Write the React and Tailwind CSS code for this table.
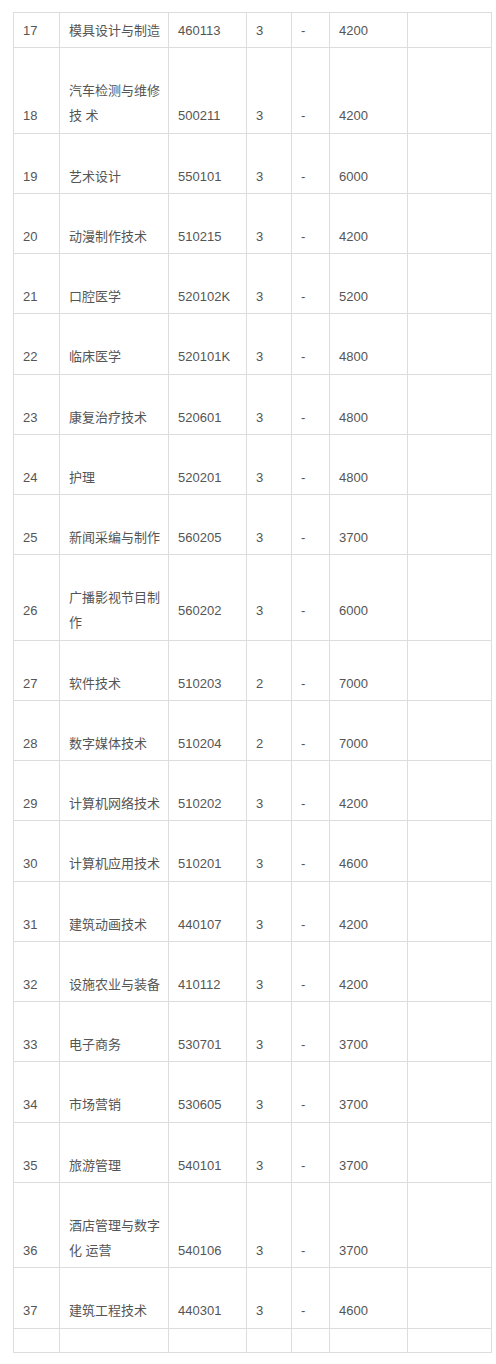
import React from "react";

const rows = [
  { h: "h-[35px]", type: "single", d: ["17", "模具设计与制造", "460113", "3", "-", "4200"] },
  { h: "h-[86px]", type: "tallLow", d: ["18", ["汽车检测与维修", "技 术"], "500211", "3", "-", "4200"] },
  { h: "h-[60px]", d: ["19", "艺术设计", "550101", "3", "-", "6000"] },
  { h: "h-[60px]", d: ["20", "动漫制作技术", "510215", "3", "-", "4200"] },
  { h: "h-[60px]", d: ["21", "口腔医学", "520102K", "3", "-", "5200"] },
  { h: "h-[61px]", d: ["22", "临床医学", "520101K", "3", "-", "4800"] },
  { h: "h-[60px]", d: ["23", "康复治疗技术", "520601", "3", "-", "4800"] },
  { h: "h-[60px]", d: ["24", "护理", "520201", "3", "-", "4800"] },
  { h: "h-[60px]", d: ["25", "新闻采编与制作", "560205", "3", "-", "3700"] },
  { h: "h-[86px]", type: "tallMid", d: ["26", ["广播影视节目制", "作"], "560202", "3", "-", "6000"] },
  { h: "h-[60px]", d: ["27", "软件技术", "510203", "2", "-", "7000"] },
  { h: "h-[60px]", d: ["28", "数字媒体技术", "510204", "2", "-", "7000"] },
  { h: "h-[60px]", d: ["29", "计算机网络技术", "510202", "3", "-", "4200"] },
  { h: "h-[61px]", d: ["30", "计算机应用技术", "510201", "3", "-", "4600"] },
  { h: "h-[60px]", d: ["31", "建筑动画技术", "440107", "3", "-", "4200"] },
  { h: "h-[60px]", d: ["32", "设施农业与装备", "410112", "3", "-", "4200"] },
  { h: "h-[60px]", d: ["33", "电子商务", "530701", "3", "-", "3700"] },
  { h: "h-[61px]", d: ["34", "市场营销", "530605", "3", "-", "3700"] },
  { h: "h-[60px]", d: ["35", "旅游管理", "540101", "3", "-", "3700"] },
  { h: "h-[85px]", type: "tallLow", d: ["36", ["酒店管理与数字", "化 运营"], "540106", "3", "-", "3700"] },
  { h: "h-[61px]", d: ["37", "建筑工程技术", "440301", "3", "-", "4600"] },
  { h: "h-[24px]", type: "empty", d: ["", "", "", "", "", ""] },
];

const widths = ["w-[46px]", "w-[109px]", "w-[78px]", "w-[45px]", "w-[38px]", "w-[78px]", "w-[84px]"];

function linesFor(row, idx) {
  const v = row.d[idx];
  if (row.type === "empty" || idx === 6) return [];
  if (row.type === "single") return [v];
  if (row.type === "tallLow") {
    if (Array.isArray(v)) return ["", v[0], v[1]];
    return ["", "", v];
  }
  if (row.type === "tallMid") {
    if (Array.isArray(v)) return ["", v[0], v[1]];
    return ["", v];
  }
  return ["", v];
}

export default function App() {
  return (
    <div className="bg-white w-[496px] min-h-[1364px] pt-[12px] pl-[13px]">
      <div
        className="w-[479px] border-r border-b border-[#dddddd] text-[13px] text-[#555555]"
        style={{ fontFamily: '"Liberation Sans", Arial, "Noto Sans CJK SC", sans-serif' }}
      >
        {rows.map((row, ri) => (
          <div key={ri} className={`flex border-t border-[#dddddd] ${row.h}`}>
            {widths.map((w, ci) => (
              <div
                key={ci}
                className={`${w} shrink-0 border-l border-[#dddddd] pl-[9px] flex flex-col justify-center overflow-hidden`}
              >
                {linesFor(row, ci).map((l, li) => (
                  <div key={li} className="h-[25px] leading-[25px] whitespace-pre">
                    {l === "" ? "\u00a0" : l}
                  </div>
                ))}
              </div>
            ))}
          </div>
        ))}
      </div>
    </div>
  );
}
